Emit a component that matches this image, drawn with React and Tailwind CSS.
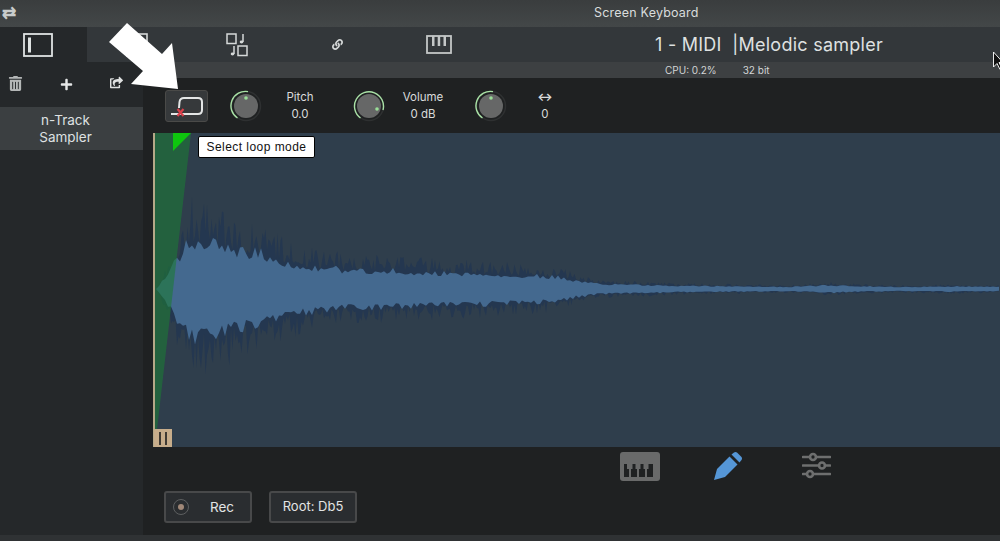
import { FaTrashAlt, FaPlus, FaShareSquare, FaLink } from 'react-icons/fa';

// envelope of the sample, [x in waveform px, half height]
const ENVELOPE = [
  [3, 0], [12, 20], [22, 50], [29, 72], [40, 94], [57, 84], [87, 74], [112, 64], [137, 50], [167, 40],
  [207, 35], [247, 34], [287, 31], [347, 28], [407, 23], [422, 16], [447, 9], [487, 8], [527, 6],
  [587, 5], [637, 4], [677, 7], [707, 5], [747, 4], [800, 5], [847, 4],
];

const envelopeAt = (x) => {
  for (let i = 1; i < ENVELOPE.length; i++) {
    const [x0, y0] = ENVELOPE[i - 1];
    const [x1, y1] = ENVELOPE[i];
    if (x <= x1) return y0 + ((y1 - y0) * (x - x0)) / (x1 - x0);
  }
  return 3;
};

const makeWave = (seed, step, low, high) => {
  let s = seed;
  const rand = () => {
    s = (s * 16807) % 2147483647;
    return s / 2147483647;
  };
  const mid = 156;
  const top = [];
  const bottom = [];
  for (let x = 3; x <= 847; x += step) {
    const e = envelopeAt(x);
    const a = low + Math.pow(rand(), 1.6) * (high - low);
    const b = low + Math.pow(rand(), 1.6) * (high - low);
    top.push(`${x},${(mid - e * a).toFixed(1)}`);
    bottom.unshift(`${x},${(mid + e * b).toFixed(1)}`);
  }
  return top.concat(bottom).join(' ');
};

const outerWave = makeWave(77, 1.5, 0.5, 1);
const innerWave = makeWave(4242, 3, 0.42, 0.62);

const Knob = ({ dotX, dotY, arc }) => (
  <svg width="32" height="32" viewBox="0 0 32 32" className="shrink-0">
    <circle cx="16" cy="16" r="14.500" fill="none" stroke="#2e3031" strokeWidth="1.5" />
    <path d={arc} fill="none" stroke="#a9e2a6" strokeWidth="1.4" />
    <circle cx="16" cy="16" r="12" fill="#666767" />
    <circle cx={dotX} cy={dotY} r="1.800" fill="#9adf98" />
  </svg>
);

const ParamLabel = ({ label, value, bold }) => (
  <div className="w-[76px] shrink-0 flex flex-col items-center gap-[5px] text-[11.500px] leading-[12px] text-[#d9dbdb]">
    <span className={bold ? 'font-bold' : ''}>{label}</span>
    <span>{value}</span>
  </div>
);

const PanelIcon = () => (
  <svg width="30" height="24" viewBox="0 0 30 24">
    <rect x="1" y="1" width="28" height="22" fill="none" stroke="#dfe3e3" strokeWidth="1.8" />
    <rect x="5" y="4.500" width="3" height="15" fill="#dfe3e3" />
  </svg>
);

const SecondTabIcon = () => (
  <svg width="22" height="24" viewBox="0 0 22 24">
    <rect x="1" y="1" width="20" height="22" fill="none" stroke="#d6d9d9" strokeWidth="1.6" />
  </svg>
);

const PadsIcon = () => (
  <svg width="22" height="24" viewBox="0 0 22 24" fill="none" stroke="#d6d9d9" strokeWidth="1.5">
    <rect x="1" y="1" width="9" height="9.500" />
    <rect x="12" y="13" width="9" height="9.500" />
    <path d="M17 1v8" />
    <path d="M8 13v8" />
    <ellipse cx="15.500" cy="9" rx="1.800" ry="1.400" fill="#d6d9d9" stroke="none" />
    <ellipse cx="6.500" cy="21" rx="1.800" ry="1.400" fill="#d6d9d9" stroke="none" />
  </svg>
);

const KeysIcon = () => (
  <svg width="26" height="19" viewBox="0 0 26 19">
    <rect x="1" y="1" width="24" height="17" fill="none" stroke="#c4c7c7" strokeWidth="1.8" />
    <path d="M6 1h2.500v10H6zM11.700 1h2.500v10h-2.500zM17.500 1H20v10h-2.500z" fill="#c4c7c7" />
  </svg>
);

const LoopIcon = () => (
  <svg width="32" height="24" viewBox="0 0 32 24" fill="none">
    <path d="M0 20H27Q31 20 31 16V8Q31 4 27 4H13Q9 4 8.500 8L8 14" stroke="#e4e6e6" strokeWidth="2" />
    <path d="M6.500 15l6 7M12.500 15l-6 7" stroke="#d8404a" strokeWidth="2.200" />
  </svg>
);

const PianoButton = () => (
  <svg width="40" height="29" viewBox="0 0 40 29">
    <rect width="40" height="29" rx="3" fill="#696a6a" />
    <path d="M4 12h3v5h2v8H4zM11 17h1.500v-5h3v5H17v8h-6zM19 17h1.500v-5h3v5H25v8h-6zM27 17h1.500v-5h4.500v13h-6z" fill="#1f2122" />
  </svg>
);

const PencilIcon = () => (
  <svg width="28" height="28" viewBox="0 0 28 28">
    <path d="M0 28L3 17 15.500 4.500 23.500 12.500 11 25z" fill="#5596d6" />
    <path d="M17.500 2.500L20 0.500Q21.500 -0.500 23 0.500L27.500 5Q28.500 6.500 27.500 8L25.500 10.500z" fill="#5596d6" />
  </svg>
);

const SlidersIcon = () => (
  <svg width="29" height="27" viewBox="0 0 29 27" fill="none" stroke="#6e6f6f" strokeWidth="2.600">
    <path d="M1 5h7M14 5h14M1 13.500h16M23 13.500h5M1 22h4M11 22h17" strokeLinecap="round" />
    <circle cx="11" cy="5" r="3" />
    <circle cx="20" cy="13.500" r="3" />
    <circle cx="8" cy="22" r="3" />
  </svg>
);

const App = () => {
  return (
    <div className="relative w-[1000px] h-[541px] overflow-hidden bg-[#1f2122] font-[Inter,sans-serif] text-[#e2e4e4]">
      {/* Title bar */}
      <div className="relative h-[27px] flex items-center bg-gradient-to-b from-[#3a3d3e] to-[#434748]">
        <span className="pl-[2px] text-[17px] leading-none font-bold text-[#c9cccc]">⇄</span>
        <span className="absolute left-[594px] text-[12.500px] tracking-[0.2px] text-[#d9dcdc]">Screen Keyboard</span>
      </div>

      {/* Tabs + track name */}
      <div className="h-[35px] flex items-center bg-[#33373a]">
        <div className="w-[87px] h-full pr-[11px] flex items-center justify-center bg-[#25282a]"><PanelIcon /></div>
        <div className="w-[100px] h-full flex items-center justify-center"><SecondTabIcon /></div>
        <div className="w-[100px] h-full flex items-center justify-center"><PadsIcon /></div>
        <div className="w-[100px] h-full flex items-center justify-center text-[#d6d9d9] text-[11px]"><FaLink /></div>
        <div className="w-[100px] h-full pl-[4px] flex items-center justify-center"><KeysIcon /></div>
        <div className="ml-[168px] text-[18px] tracking-[0.25px] text-[#dfe1e1] whitespace-nowrap">1 - MIDI &nbsp;|Melodic sampler</div>
      </div>

      <div className="flex h-[473px]">
        {/* Sidebar */}
        <div className="w-[143px] shrink-0 bg-[#25282a]">
          <div className="h-[45px] relative flex items-center text-[#b4b7b7]">
            <div className="w-[31px] flex justify-center -mt-[3px] text-[15px]"><FaTrashAlt /></div>
            <div className="w-[70px] flex justify-center text-[13px] text-[#e6e8e8]"><FaPlus /></div>
            <div className="w-[30px] flex justify-center -mt-[5px] text-[13px] text-[#dfe1e1]"><FaShareSquare /></div>
          </div>
          <div className="h-[43px] pr-[12px] flex items-center justify-center text-center text-[13.500px] leading-[17px] bg-[#3b3f41] text-[#dfe1e1]">
            n-Track<br />Sampler
          </div>
        </div>

        {/* Editor */}
        <div className="flex-1 flex flex-col min-w-0">
          <div className="h-[16px] flex items-center bg-[#3d4042] text-[10px] text-[#d2d5d5]">
            <span className="ml-[522px]">CPU: 0.2%</span>
            <span className="ml-[26px]">32 bit</span>
          </div>

          <div className="h-[55px] flex items-center pl-[22px]">
            <div className="w-[43px] h-[32px] mr-[22px] shrink-0 flex items-center justify-center rounded-[3px] border border-[#4a4a48] bg-[#36393b]">
              <LoopIcon />
            </div>
            <Knob dotX="16" dotY="8" arc="M7.500 28 A14.500 14.500 0 0 1 18 1.600" />
            <ParamLabel label="Pitch" value="0.0" />
            <div className="ml-[15px] shrink-0"><Knob dotX="24" dotY="19" arc="M7.500 28 A14.500 14.500 0 1 1 30 20" /></div>
            <ParamLabel label="Volume" value="0 dB" />
            <div className="ml-[14px] shrink-0"><Knob dotX="16" dotY="8" arc="M7.500 28 A14.500 14.500 0 0 1 18 1.600" /></div>
            <ParamLabel label="↔" value="0" bold />
          </div>

          {/* Waveform */}
          <div className="ml-[10px] h-[314px] bg-[#2f3e4c]">
            <svg width="847" height="314" viewBox="0 0 847 314" className="block">
              <polygon points={outerWave} fill="#243750" />
              <polygon points={innerWave} fill="#44698f" />
              <polygon points="2,0 38,0 2,314" fill="#1c7a35" fillOpacity="0.6" />
              <polygon points="20,0 38,0 20,18" fill="#0ec60e" />
              <rect x="0" y="0" width="2" height="314" fill="#b5a888" />
              <rect x="1" y="296" width="18" height="18" fill="#c7ad8b" />
              <rect x="6" y="299" width="2" height="13" fill="#3f3a33" />
              <rect x="12" y="299" width="2" height="13" fill="#3f3a33" />
            </svg>
          </div>

          {/* Bottom controls */}
          <div className="h-[88px] relative">
            <div className="flex items-start pt-[5px] pl-[477px]">
              <PianoButton />
              <div className="ml-[54px]"><PencilIcon /></div>
              <div className="ml-[60px]"><SlidersIcon /></div>
            </div>
            <div className="flex gap-[17px] pl-[21px] mt-[10px]">
              <div className="w-[88px] h-[32px] flex items-center rounded-[3px] border-2 border-[#48494a] bg-[#2a2d30] text-[13.500px]">
                <span className="ml-[7px] w-[16px] h-[16px] rounded-full border border-[#5d5f60] flex items-center justify-center">
                  <span className="w-[6px] h-[6px] rounded-full bg-[#a08878]" />
                </span>
                <span className="ml-[21px]">Rec</span>
              </div>
              <div className="w-[88px] h-[32px] flex items-center justify-center rounded-[3px] border-2 border-[#48494a] bg-[#2a2d30] text-[13px] whitespace-nowrap">
                Root: Db5
              </div>
            </div>
          </div>
        </div>
      </div>

      <div className="h-[6px] bg-[#2f3234]" />

      {/* Tooltip */}
      <div className="absolute left-[198px] top-[136px] w-[117px] h-[22px] flex items-center justify-center rounded-[2px] border border-black bg-white font-['Liberation_Sans',sans-serif] text-[12px] tracking-[0.45px] text-[#111]">
        Select loop mode
      </div>

      {/* Callout arrow pasted over the screenshot */}
      <svg width="200" height="110" viewBox="0 0 200 110" className="absolute left-0 top-0">
        <polygon points="127,23 162,54 172,43 178,89 131,84 143,71 109,42" fill="#ffffff" />
      </svg>

      {/* Mouse cursor */}
      <svg width="10" height="20" viewBox="0 0 10 20" className="absolute left-[992px] top-[51px]">
        <path d="M1.500 1v15l3.500-3.500 3 6 2-1-3-6h4z" fill="#111" stroke="#fff" strokeWidth="0.9" />
      </svg>
    </div>
  );
};

export default App;
